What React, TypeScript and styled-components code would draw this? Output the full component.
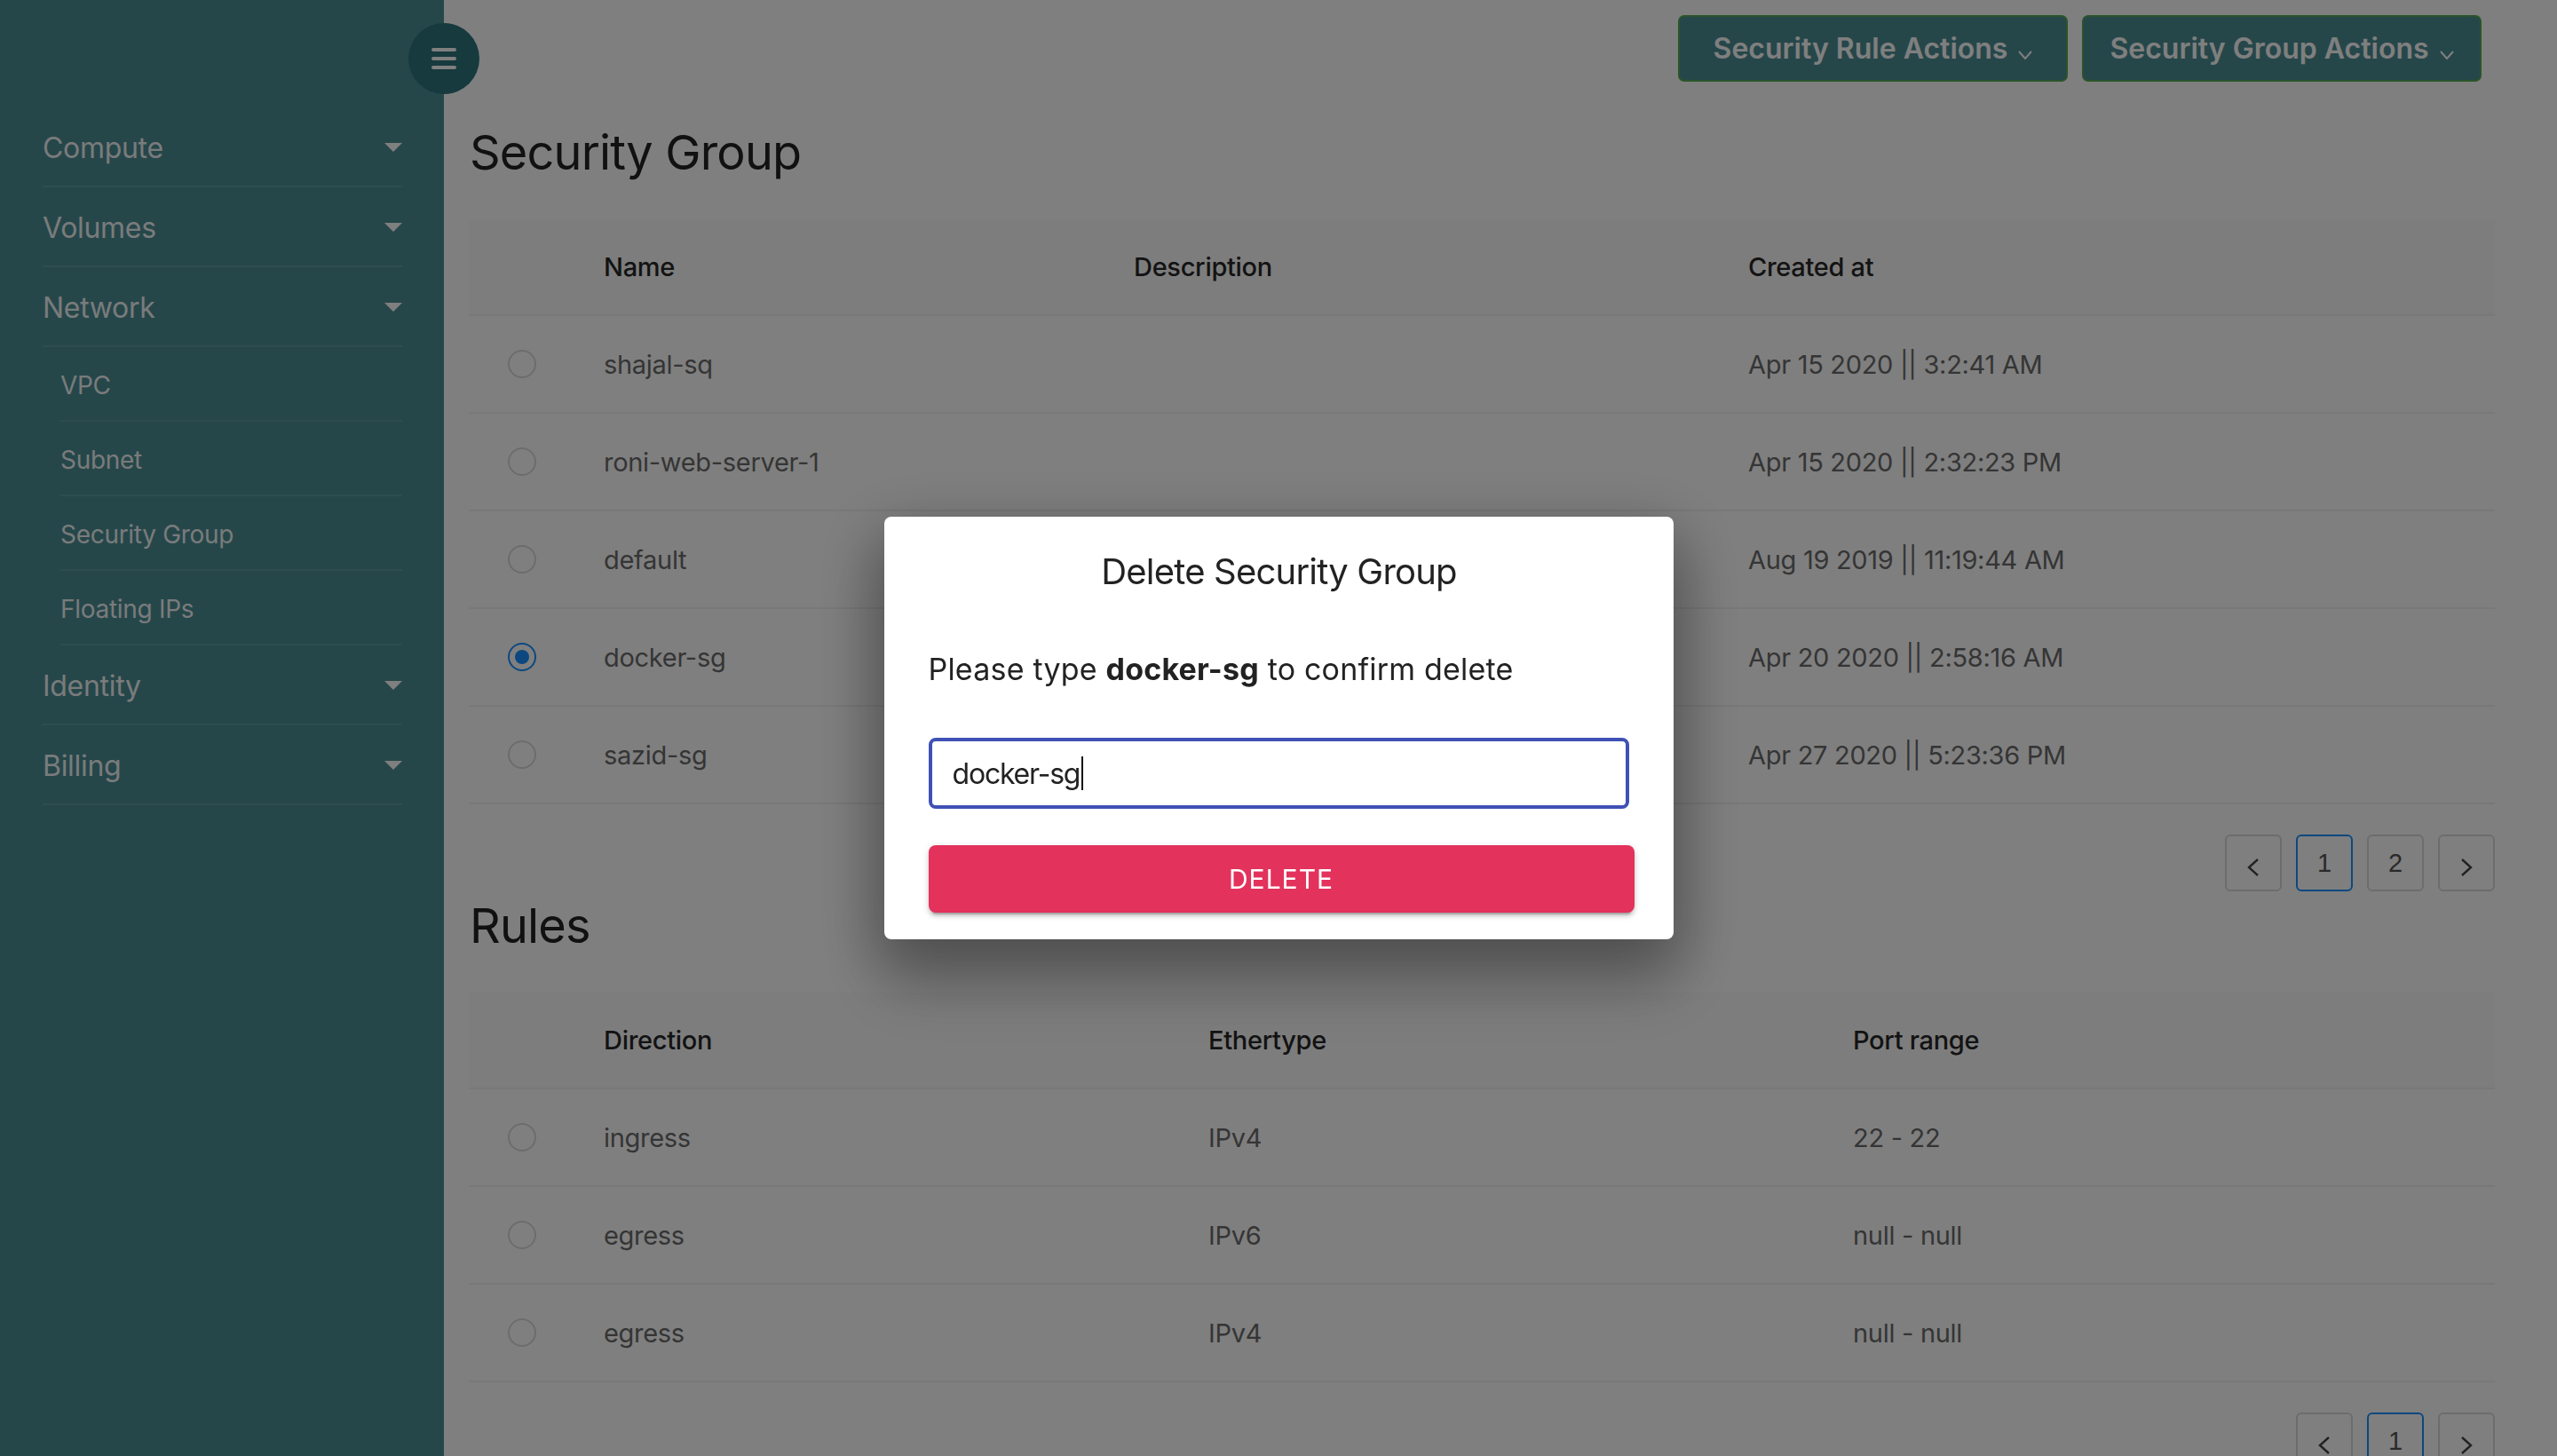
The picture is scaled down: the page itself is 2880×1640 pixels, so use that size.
import React from 'react';
import styled, { createGlobalStyle } from 'styled-components';

const COLORS = {
  Sidebar: '#4c8e94',
  SidebarLine: '#5a9ba0',
  Hamburger: '#2c747c',
  Heading: '#222222',
  HeadText: '#262626',
  CellText: '#6b6b6b',
  Border: '#f0f0f0',
  HeadBg: '#fafafa',
  RadioBorder: '#d9d9d9',
  Primary: '#1890ff',
  Indigo: '#3f51b5',
  Danger: '#e3325c',
};

const GlobalStyle = createGlobalStyle`
  html, body {
    margin: 0;
    padding: 0;
    height: 100%;
    overflow: hidden;
  }
  body {
    font-family: Inter, "Noto Sans", "Liberation Sans", sans-serif;
    background: #ffffff;
    color: ${COLORS.Heading};
  }
  * {
    box-sizing: border-box;
  }
`;

const Layout = {
  Wrap: styled.div`
    display: flex;
    width: 100%;
    height: 100vh;
    overflow: hidden;
    position: relative;
  `,
  Main: styled.main`
    flex: 1;
    padding: 17px 70px 0 28px;
    display: flex;
    flex-direction: column;
  `,
};

const Side = {
  Bar: styled.aside`
    width: 500px;
    flex-shrink: 0;
    height: 100%;
    background-color: ${COLORS.Sidebar};
    padding-top: 121px;
    position: relative;
  `,
  Toggle: styled.button`
    position: absolute;
    top: 26px;
    right: -40px;
    width: 80px;
    height: 80px;
    border-radius: 50%;
    border: none;
    background-color: ${COLORS.Hamburger};
    display: flex;
    flex-direction: column;
    align-items: center;
    justify-content: center;
    gap: 6px;
    padding: 0;
    z-index: 2;
    span {
      display: block;
      width: 28px;
      height: 4px;
      border-radius: 2px;
      background: #ffffff;
    }
  `,
  Item: styled.div<{ $sub?: boolean }>`
    display: flex;
    align-items: center;
    justify-content: space-between;
    margin-left: ${(p) => (p.$sub ? 68 : 48)}px;
    width: ${(p) => (p.$sub ? 385 : 405)}px;
    height: ${(p) => (p.$sub ? 84 : 90)}px;
    padding-top: ${(p) => (p.$sub ? 4 : 2)}px;
    border-bottom: 2px solid ${COLORS.SidebarLine};
    color: rgba(255, 255, 255, 0.95);
    font-size: ${(p) => (p.$sub ? 28 : 32)}px;
    letter-spacing: -0.3px;
  `,
  Caret: styled.i`
    width: 0;
    height: 0;
    border-left: 10px solid transparent;
    border-right: 10px solid transparent;
    border-top: 10px solid #ffffff;
  `,
};

const Top = {
  Bar: styled.div`
    display: flex;
    justify-content: flex-end;
    gap: 16px;
    padding-right: 15px;
  `,
  Action: styled.button<{ $w: number }>`
    width: ${(p) => p.$w}px;
    height: 75px;
    border-radius: 7px;
    border: 2px solid #55a855;
    background-color: ${COLORS.Sidebar};
    color: #ffffff;
    font-family: Inter, "Noto Sans", sans-serif;
    font-size: 32px;
    font-weight: 600;
    display: flex;
    align-items: center;
    justify-content: center;
    gap: 12px;
    padding: 0;
    svg {
      margin-top: 14px;
    }
  `,
};

const Heading = styled.h1<{ $mt: number }>`
  margin: ${(p) => p.$mt}px 0 0 1px;
  font-size: 54px;
  line-height: 67px;
  font-weight: 400;
  letter-spacing: -0.8px;
  color: ${COLORS.Heading};
`;

const Table = {
  Wrap: styled.div`
    margin-top: 42px;
    width: 100%;
  `,
  Row: styled.div<{ $cols: string; $head?: boolean }>`
    display: grid;
    grid-template-columns: ${(p) => p.$cols};
    align-items: center;
    height: ${(p) => (p.$head ? 109 : 110)}px;
    border-bottom: 2px solid ${COLORS.Border};
    background-color: ${(p) => (p.$head ? COLORS.HeadBg : 'transparent')};
  `,
  Cell: styled.div<{ $head?: boolean }>`
    padding-left: 32px;
    font-size: 29px;
    font-weight: ${(p) => (p.$head ? 500 : 400)};
    color: ${(p) => (p.$head ? COLORS.HeadText : COLORS.CellText)};
    letter-spacing: -0.3px;
    white-space: nowrap;
  `,
  Select: styled.div`
    display: flex;
    justify-content: center;
  `,
};

const Radio = styled.span<{ $checked?: boolean }>`
  width: 32px;
  height: 32px;
  border-radius: 50%;
  border: 2px solid ${(p) => (p.$checked ? COLORS.Primary : COLORS.RadioBorder)};
  display: flex;
  align-items: center;
  justify-content: center;
  &::after {
    content: '';
    width: 16px;
    height: 16px;
    border-radius: 50%;
    background: ${(p) => (p.$checked ? COLORS.Primary : 'transparent')};
  }
`;

const Pager = {
  Wrap: styled.div`
    display: flex;
    justify-content: flex-end;
    gap: 16px;
    margin-top: 34px;
  `,
  Item: styled.div<{ $active?: boolean }>`
    width: 64px;
    height: 64px;
    border-radius: 6px;
    border: 2px solid ${(p) => (p.$active ? COLORS.Primary : COLORS.RadioBorder)};
    display: flex;
    align-items: center;
    justify-content: center;
    font-family: "Liberation Sans", Arial, sans-serif;
    font-size: 29px;
    color: #555555;
    svg {
      margin-top: 10px;
    }
  `,
};

const Modal = {
  Backdrop: styled.div`
    position: fixed;
    inset: 0;
    background: rgba(0, 0, 0, 0.5);
    display: flex;
    align-items: center;
    justify-content: center;
    z-index: 10;
  `,
  Box: styled.div`
    width: 889px;
    background: #ffffff;
    border-radius: 8px;
    padding: 30px 43px 30px 50px;
    box-shadow: 0 22px 70px 8px rgba(0, 0, 0, 0.28), 0 48px 76px 6px rgba(0, 0, 0, 0.18);
    display: flex;
    flex-direction: column;
  `,
  Title: styled.h2`
    margin: 0;
    text-align: center;
    font-size: 40px;
    line-height: 64px;
    font-weight: 400;
    letter-spacing: -0.8px;
    color: #222222;
    padding-right: 6px;
  `,
  Text: styled.p`
    margin: 54px 0 0;
    font-size: 34px;
    line-height: 48px;
    letter-spacing: 0.2px;
    color: #222222;
    b {
      font-weight: 700;
    }
  `,
  Field: styled.div`
    margin-top: 53px;
    width: 789px;
    height: 80px;
    border: 4px solid ${COLORS.Indigo};
    border-radius: 8px;
    padding-left: 23px;
    display: flex;
    align-items: center;
    font-size: 32px;
    letter-spacing: -1.2px;
    color: #222222;
  `,
  Cursor: styled.span`
    display: inline-block;
    width: 2px;
    height: 38px;
    margin-left: 2px;
    background: #111111;
  `,
  Delete: styled.button`
    margin-top: 41px;
    width: 795px;
    height: 76px;
    border: none;
    border-radius: 8px;
    background-color: ${COLORS.Danger};
    color: #ffffff;
    font-family: Inter, "Noto Sans", sans-serif;
    font-size: 30px;
    font-weight: 400;
    letter-spacing: 1px;
    text-transform: uppercase;
    box-shadow: 0 6px 2px -4px rgba(0, 0, 0, 0.2), 0 4px 4px 0 rgba(0, 0, 0, 0.14),
      0 2px 10px 0 rgba(0, 0, 0, 0.12);
  `,
};

const Chevron = ({ dir }: { dir: 'down' | 'left' | 'right' }) => {
  if (dir === 'down') {
    return (
      <svg width="16" height="10" viewBox="0 0 16 10">
        <polyline points="1,1 8,9 15,1" fill="none" stroke="#ffffff" strokeWidth="2" />
      </svg>
    );
  }
  const pts = dir === 'left' ? '12,1 2,10 12,19' : '2,1 12,10 2,19';
  return (
    <svg width="14" height="20" viewBox="0 0 14 20">
      <polyline points={pts} fill="none" stroke="#444444" strokeWidth="2.4" />
    </svg>
  );
};

const navItems = [
  { label: 'Compute', sub: false },
  { label: 'Volumes', sub: false },
  { label: 'Network', sub: false },
  { label: 'VPC', sub: true },
  { label: 'Subnet', sub: true },
  { label: 'Security Group', sub: true },
  { label: 'Floating IPs', sub: true },
  { label: 'Identity', sub: false },
  { label: 'Billing', sub: false },
];

const groups = [
  { name: 'shajal-sq', created: 'Apr 15 2020 || 3:2:41 AM' },
  { name: 'roni-web-server-1', created: 'Apr 15 2020 || 2:32:23 PM' },
  { name: 'default', created: 'Aug 19 2019 || 11:19:44 AM' },
  { name: 'docker-sg', created: 'Apr 20 2020 || 2:58:16 AM', checked: true },
  { name: 'sazid-sg', created: 'Apr 27 2020 || 5:23:36 PM' },
];

const rules = [
  { direction: 'ingress', ether: 'IPv4', range: '22 - 22' },
  { direction: 'egress', ether: 'IPv6', range: 'null - null' },
  { direction: 'egress', ether: 'IPv4', range: 'null - null' },
];

const GROUP_COLS = '120px 597px 692px 1fr';
const RULE_COLS = '120px 681px 726px 1fr';

function App() {
  return (
    <>
      <GlobalStyle />
      <Layout.Wrap>
        <Side.Bar>
          <Side.Toggle aria-label="menu">
            <span />
            <span />
            <span />
          </Side.Toggle>
          {navItems.map((item) => (
            <Side.Item key={item.label} $sub={item.sub}>
              {item.label}
              {!item.sub && <Side.Caret />}
            </Side.Item>
          ))}
        </Side.Bar>

        <Layout.Main>
          <Top.Bar>
            <Top.Action $w={439}>
              Security Rule Actions <Chevron dir="down" />
            </Top.Action>
            <Top.Action $w={450}>
              Security Group Actions <Chevron dir="down" />
            </Top.Action>
          </Top.Bar>

          <Heading $mt={46}>Security Group</Heading>
          <Table.Wrap>
            <Table.Row $cols={GROUP_COLS} $head>
              <div />
              <Table.Cell $head>Name</Table.Cell>
              <Table.Cell $head>Description</Table.Cell>
              <Table.Cell $head>Created at</Table.Cell>
            </Table.Row>
            {groups.map((g) => (
              <Table.Row $cols={GROUP_COLS} key={g.name}>
                <Table.Select>
                  <Radio $checked={g.checked} />
                </Table.Select>
                <Table.Cell>{g.name}</Table.Cell>
                <Table.Cell />
                <Table.Cell>{g.created}</Table.Cell>
              </Table.Row>
            ))}
          </Table.Wrap>
          <Pager.Wrap>
            <Pager.Item><Chevron dir="left" /></Pager.Item>
            <Pager.Item $active>1</Pager.Item>
            <Pager.Item>2</Pager.Item>
            <Pager.Item><Chevron dir="right" /></Pager.Item>
          </Pager.Wrap>

          <Heading $mt={5}>Rules</Heading>
          <Table.Wrap>
            <Table.Row $cols={RULE_COLS} $head>
              <div />
              <Table.Cell $head>Direction</Table.Cell>
              <Table.Cell $head>Ethertype</Table.Cell>
              <Table.Cell $head>Port range</Table.Cell>
            </Table.Row>
            {rules.map((r, i) => (
              <Table.Row $cols={RULE_COLS} key={i}>
                <Table.Select>
                  <Radio />
                </Table.Select>
                <Table.Cell>{r.direction}</Table.Cell>
                <Table.Cell>{r.ether}</Table.Cell>
                <Table.Cell>{r.range}</Table.Cell>
              </Table.Row>
            ))}
          </Table.Wrap>
          <Pager.Wrap>
            <Pager.Item><Chevron dir="left" /></Pager.Item>
            <Pager.Item $active>1</Pager.Item>
            <Pager.Item><Chevron dir="right" /></Pager.Item>
          </Pager.Wrap>
        </Layout.Main>

        <Modal.Backdrop>
          <Modal.Box>
            <Modal.Title>Delete Security Group</Modal.Title>
            <Modal.Text>
              Please type <b>docker-sg</b> to confirm delete
            </Modal.Text>
            <Modal.Field>
              docker-sg
              <Modal.Cursor />
            </Modal.Field>
            <Modal.Delete>Delete</Modal.Delete>
          </Modal.Box>
        </Modal.Backdrop>
      </Layout.Wrap>
    </>
  );
}

export default App;
